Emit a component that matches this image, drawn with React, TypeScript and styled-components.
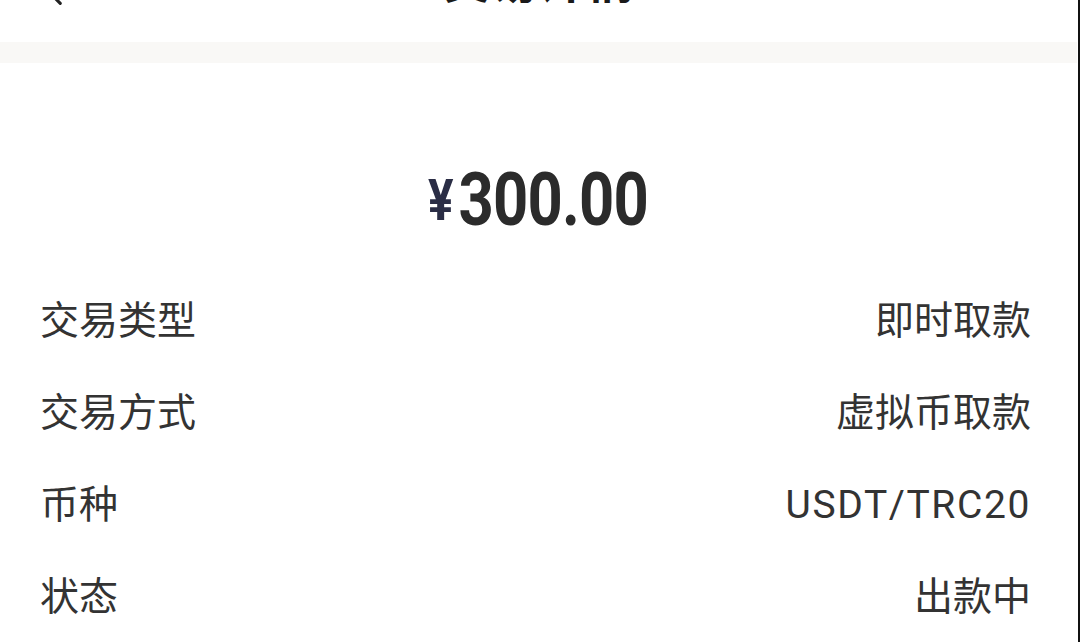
import React from "react";
import styled, { createGlobalStyle } from "styled-components";

const Global = createGlobalStyle`
  html, body { margin: 0; padding: 0; background: #ffffff; }
  body { font-family: Roboto, "Noto Sans CJK SC", sans-serif; }
  * { box-sizing: border-box; }
`;

const Frame = styled.div`
  width: 1080px;
  height: 642px;
  overflow: hidden;
  display: flex;
  border-right: 2px solid #111;
  background: #fff;
`;

const Page = styled.div`
  flex: 0 0 1077px;
  display: flex;
  flex-direction: column;
`;

const Header = styled.header`
  height: 42px;
  flex: 0 0 42px;
  overflow: hidden;
  position: relative;
  display: flex;
  justify-content: center;
  align-items: flex-start;
`;

const Back = styled.div`
  position: absolute;
  left: 39px;
  top: -25px;
  width: 34px;
  height: 34px;
  color: #222;
`;

const Title = styled.h1`
  margin: -42px 0 0;
  font-family: Roboto, "Noto Sans CJK SC", sans-serif;
  font-size: 48px;
  line-height: 48px;
  font-weight: 700;
  color: #1a1a1a;
`;

const Band = styled.div`
  height: 21px;
  flex: 0 0 21px;
  background: #f9f8f6;
`;

const AmountSection = styled.section`
  display: flex;
  justify-content: center;
  padding: 99px 0 38px;
`;

const Amount = styled.div`
  display: inline-flex;
  align-items: center;
  gap: 6px;
  transform: scaleX(0.82);
  font-family: Roboto, sans-serif;
  font-weight: 700;
  height: 75px;
`;

const Currency = styled.span`
  font-size: 58px;
  line-height: 58px;
  color: #2a2d45;
`;

const Digits = styled.span`
  font-size: 75px;
  line-height: 75px;
  color: #2b2b2b;
  letter-spacing: -1px;
`;

const List = styled.div`
  display: flex;
  flex-direction: column;
  padding: 0 46px 0 40px;
`;

const Row = styled.div`
  height: 92px;
  display: flex;
  align-items: center;
  justify-content: space-between;
  font-size: 39px;
  line-height: 52px;
  color: #333;
`;

const Label = styled.span``;
const Value = styled.span<{ $latin?: boolean }>`
  letter-spacing: ${(p) => (p.$latin ? "1.6px" : "0")};
`;

const rows: [string, string, boolean][] = [
  ["交易类型", "即时取款", false],
  ["交易方式", "虚拟币取款", false],
  ["币种", "USDT/TRC20", true],
  ["状态", "出款中", false],
];

export default function App() {
  return (
    <>
      <Global />
      <Frame>
        <Page>
          <Header>
            <Back>
              <svg viewBox="0 0 24 24" width="34" height="34" fill="none" stroke="currentColor" strokeWidth="2.2" strokeLinecap="round" strokeLinejoin="round">
                <path d="M15 4 L7 12 L15 20" />
              </svg>
            </Back>
            <Title>交易详情</Title>
          </Header>
          <Band />
          <AmountSection>
            <Amount>
              <Currency>¥</Currency>
              <Digits>300.00</Digits>
            </Amount>
          </AmountSection>
          <List>
            {rows.map(([l, v, latin]) => (
              <Row key={l}>
                <Label>{l}</Label>
                <Value $latin={latin}>{v}</Value>
              </Row>
            ))}
          </List>
        </Page>
      </Frame>
    </>
  );
}
